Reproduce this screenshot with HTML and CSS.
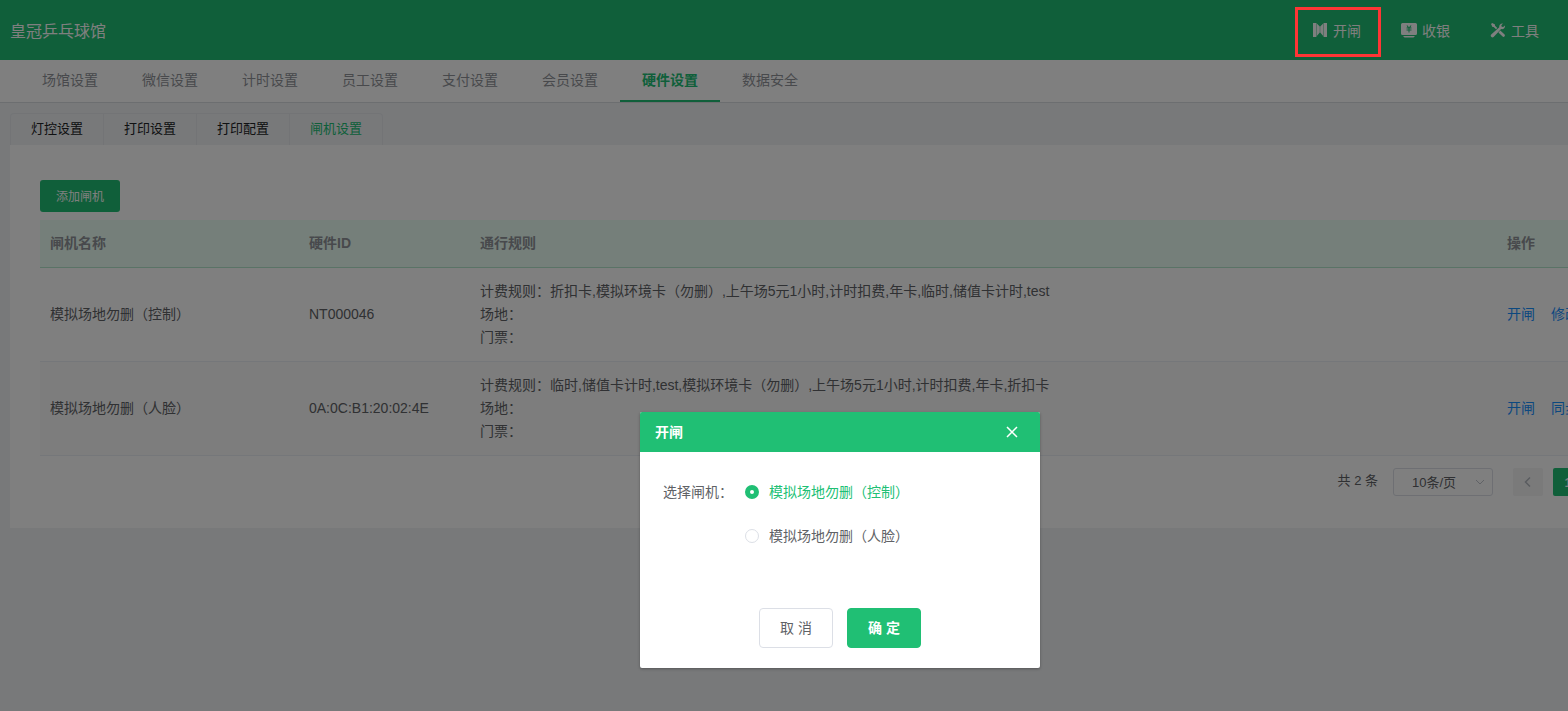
FILE: index.html
```html
<!DOCTYPE html>
<html lang="zh-CN">

<head>
  <meta charset="UTF-8">
  <meta name="viewport" content="width=device-width, initial-scale=1.0">
  <title>闸机设置</title>
  <link rel="stylesheet" href="styles.css">
</head>

<body>
  <div class="page">
    <header class="topbar">
      <h1>皇冠乒乓球馆</h1>
      <nav class="tools">
        <a href="#" class="marked">
          <svg width="16" height="16" viewBox="0 0 16 16" fill="currentColor">
            <path d="M1 1h3.4v14H1zM11.6 1H15v14h-3.4zM4.8 1.5L7.8 4.5v6L4.8 14zM11.2 1.5L8.2 4.5v6l3 3.5z" />
          </svg>
          开闸
        </a>
        <a href="#">
          <svg width="16" height="16" viewBox="0 0 16 16" fill="currentColor">
            <path fill-rule="evenodd" d="M1.5 1h13A1.5 1.5 0 0 1 16 2.500v9a1.500 1.500 0 0 1-1.500 1.500h-13A1.500 1.500 0 0 1 0 11.500v-9A1.500 1.500 0 0 1 1.500 1zM5.500 3.500l1.200 2H5.500v1h2v1h-2v1h2v2h1v-2h2v-1h-2v-1h2v-1H9.300l1.200-2H9.300L8 5.500 6.700 3.500z" />
            <path d="M2.500 14h11v.5l-1 1h-9l-1-1z" />
          </svg>
          收银
        </a>
        <a href="#">
          <svg width="16" height="16" viewBox="0 0 16 16" fill="currentColor">
            <path d="M1.200 12.400L9.300 5.200C8.800 3.200 10.300 1.200 13 1.400L11.300 3.200l.4 1.500 1.500.4L15 3.400c.3 2.600-1.800 4.200-3.900 3.700L3.600 15c-.7.6-1.800.5-2.400-.2-.6-.7-.7-1.700 0-2.400z" />
            <path d="M1 2l1.200-1L5 2.500v1.200L7.300 6 6 7.300 3.700 5H2.500zM10.300 8.500l4.300 4c1.100 1.200-.7 3.200-2 2.100l-4.200-4.200z" />
          </svg>
          工具
        </a>
      </nav>
    </header>

    <nav class="main-tabs">
      <a href="#">场馆设置</a>
      <a href="#">微信设置</a>
      <a href="#">计时设置</a>
      <a href="#">员工设置</a>
      <a href="#">支付设置</a>
      <a href="#">会员设置</a>
      <a href="#" class="active">硬件设置</a>
      <a href="#">数据安全</a>
    </nav>

    <main>
      <nav class="sub-tabs">
        <a href="#">灯控设置</a>
        <a href="#">打印设置</a>
        <a href="#">打印配置</a>
        <a href="#" class="active">闸机设置</a>
      </nav>

      <section class="panel">
        <button type="button" class="add-button">添加闸机</button>
        <table>
          <colgroup>
            <col class="col-name">
            <col class="col-id">
            <col>
            <col class="col-actions">
          </colgroup>
          <thead>
            <tr>
              <th>闸机名称</th>
              <th>硬件ID</th>
              <th>通行规则</th>
              <th>操作</th>
            </tr>
          </thead>
          <tbody>
            <tr>
              <td>模拟场地勿删（控制）</td>
              <td>NT000046</td>
              <td>
                计费规则：折扣卡,模拟环境卡（勿删）,上午场5元1小时,计时扣费,年卡,临时,储值卡计时,test<br>
                场地：<br>
                门票：
              </td>
              <td>
                <div class="actions">
                  <a href="#">开闸</a>
                  <a href="#">修改</a>
                </div>
              </td>
            </tr>
            <tr>
              <td>模拟场地勿删（人脸）</td>
              <td>0A:0C:B1:20:02:4E</td>
              <td>
                计费规则：临时,储值卡计时,test,模拟环境卡（勿删）,上午场5元1小时,计时扣费,年卡,折扣卡<br>
                场地：<br>
                门票：
              </td>
              <td>
                <div class="actions">
                  <a href="#">开闸</a>
                  <a href="#">同步</a>
                </div>
              </td>
            </tr>
          </tbody>
        </table>

        <div class="pagination">
          <span>共 2 条</span>
          <div class="page-size">
            <select aria-label="每页条数">
              <option>10条/页</option>
              <option>20条/页</option>
            </select>
            <svg width="10" height="10" viewBox="0 0 10 10" fill="none" stroke="currentColor">
              <path d="M1 3l4 4 4-4" />
            </svg>
          </div>
          <div class="pager">
            <button type="button" aria-label="上一页" disabled>
              <svg width="12" height="12" viewBox="0 0 12 12" fill="none" stroke="currentColor" stroke-width="1.500">
                <path d="M8 1.500L3.500 6 8 10.500" />
              </svg>
            </button>
            <button type="button" class="current">1</button>
            <button type="button" aria-label="下一页" disabled>
              <svg width="12" height="12" viewBox="0 0 12 12" fill="none" stroke="currentColor" stroke-width="1.500">
                <path d="M4 1.500L8.500 6 4 10.500" />
              </svg>
            </button>
          </div>
        </div>
      </section>
    </main>

    <div class="overlay">
      <form class="dialog" role="dialog" aria-labelledby="dialogTitle">
        <div class="dialog-header">
          <h2 id="dialogTitle">开闸</h2>
          <button type="button" class="close" aria-label="关闭">
            <svg width="12" height="12" viewBox="0 0 12 12" fill="none" stroke="currentColor" stroke-width="1.500">
              <path d="M1 1l10 10M11 1L1 11" />
            </svg>
          </button>
        </div>
        <div class="dialog-body">
          <span id="gateLabel">选择闸机：</span>
          <div class="options" role="radiogroup" aria-labelledby="gateLabel">
            <label><input type="radio" name="gate" checked><span>模拟场地勿删（控制）</span></label>
            <label><input type="radio" name="gate"><span>模拟场地勿删（人脸）</span></label>
          </div>
        </div>
        <div class="dialog-footer">
          <button type="button">取 消</button>
          <button type="submit" class="primary">确 定</button>
        </div>
      </form>
    </div>
  </div>
</body>

</html>
```

FILE: styles.css
```css
* {
  box-sizing: border-box;
}

body {
  margin: 0;
  font-family: "Liberation Sans", "Noto Sans CJK SC", sans-serif;
  font-size: 14px;
  color: #606266;
  background: #f0f2f5;
  overflow: hidden;
}

a {
  text-decoration: none;
}

button,
select {
  font-family: inherit;
  cursor: pointer;
}

/* the layout is designed for wide desktop screens */
.page {
  position: relative;
  min-width: 1680px;
  min-height: 100vh;
}

.topbar {
  display: flex;
  justify-content: space-between;
  align-items: center;
  height: 60px;
  padding: 0 121px 0 10px;
  color: #fff;
  background: #20bf74;
}

.topbar h1 {
  margin: 0;
  font-size: 16px;
  font-weight: normal;
}

.tools {
  display: flex;
}

.tools a {
  position: relative;
  display: flex;
  align-items: center;
  gap: 5px;
  height: 60px;
  padding: 0 20px;
  color: #fff;
}

.marked::after {
  content: "";
  position: absolute;
  top: 7px;
  right: 0;
  bottom: 3px;
  left: 3px;
  border: 3px solid #ff3535;
  z-index: 20;
}

.main-tabs {
  display: flex;
  padding-left: 20px;
  background: #fff;
  border-bottom: 1px solid #d8dce0;
}

.main-tabs a {
  width: 100px;
  height: 42px;
  line-height: 40px;
  text-align: center;
  color: #909399;
}

.main-tabs .active {
  font-weight: bold;
  color: #20bf74;
  border-bottom: 2px solid #20bf74;
}

main {
  padding: 10px 10px 0;
}

.sub-tabs {
  display: inline-flex;
  vertical-align: top;
  border: 1px solid #e6e9ed;
  border-bottom: none;
  border-radius: 4px 4px 0 0;
}

.sub-tabs a {
  height: 31px;
  padding: 0 20px;
  font-size: 13px;
  line-height: 29px;
  color: #202224;
}

.sub-tabs a + a {
  border-left: 1px solid #e6e9ed;
}

.sub-tabs .active {
  color: #20bf74;
}

.panel {
  padding: 35px 30px 32px;
  background: #fff;
}

.add-button {
  display: block;
  width: 80px;
  height: 32px;
  margin-bottom: 8px;
  padding: 0 0 2px;
  font-size: 12px;
  color: #fff;
  background: #20bf74;
  border: none;
  border-radius: 3px;
}

table {
  width: 100%;
  table-layout: fixed;
  border-collapse: separate;
  border-spacing: 0;
}

.col-name {
  width: 259px;
}

.col-id {
  width: 171px;
}

.col-actions {
  width: 143px;
}

th,
td {
  padding: 12px 10px;
  line-height: 23px;
  text-align: left;
  border-bottom: 1px solid #ebeef5;
}

th {
  color: #909399;
  background: #eafff4;
  border-bottom-color: #b4e6cd;
}

tbody tr:nth-child(even) {
  background: #fafafa;
}

.actions {
  display: flex;
  gap: 16px;
}

.actions a {
  color: #1890ff;
}

.pagination {
  display: flex;
  justify-content: flex-end;
  align-items: center;
  padding: 12px 17px 0 0;
  font-size: 13px;
  line-height: 28px;
}

.pagination > span {
  height: 28px;
  line-height: 26px;
}

.page-size {
  position: relative;
  margin: 0 20px 0 15px;
}

.page-size select {
  display: block;
  width: 100px;
  height: 28px;
  padding: 0 18px;
  font-size: 13px;
  color: #606266;
  background: #fff;
  border: 1px solid #dcdfe6;
  border-radius: 3px;
  appearance: none;
}

.page-size svg {
  position: absolute;
  top: 9px;
  right: 8px;
  color: #c0c4cc;
}

.pager {
  display: flex;
  gap: 10px;
}

.pager button {
  display: flex;
  justify-content: center;
  align-items: center;
  width: 30px;
  height: 28px;
  padding: 0;
  font-size: 13px;
  color: #b4b8bf;
  background: #f4f4f5;
  border: none;
  border-radius: 2px;
}

.pager .current {
  font-weight: bold;
  color: #fff;
  background: #20bf74;
}

.overlay {
  position: absolute;
  top: 0;
  right: 0;
  bottom: 0;
  left: 0;
  padding-top: 412px;
  background: rgba(0, 0, 0, 0.5);
  z-index: 10;
}

.dialog {
  width: 400px;
  margin: 0 auto;
  background: #fff;
  border-radius: 2px;
  box-shadow: 0 1px 3px rgba(0, 0, 0, 0.3);
  overflow: hidden;
}

.dialog-header {
  display: flex;
  justify-content: space-between;
  align-items: center;
  height: 40px;
  padding: 0 20px 0 15px;
  color: #fff;
  background: #20bf74;
}

.dialog-header h2 {
  margin: 0;
  font-size: 14px;
  line-height: 20px;
}

.close {
  display: flex;
  padding: 2px;
  color: #fff;
  background: none;
  border: none;
}

.dialog-body {
  display: flex;
  gap: 12px;
  padding: 18px 23px 0;
  line-height: 44px;
}

.options label {
  display: flex;
  align-items: center;
  gap: 10px;
  cursor: pointer;
}

.options input {
  width: 14px;
  height: 14px;
  margin: 0;
  background: #fff;
  border: 1px solid #dcdfe6;
  border-radius: 50%;
  appearance: none;
}

.options input:checked {
  border: 5px solid #20bf74;
}

.options input:checked + span {
  color: #20bf74;
}

.dialog-footer {
  display: flex;
  justify-content: center;
  gap: 14px;
  padding: 50px 0 20px;
}

.dialog-footer button {
  width: 74px;
  height: 40px;
  padding: 0 0 2px;
  font-size: 14px;
  color: #606266;
  background: #fff;
  border: 1px solid #dcdfe6;
  border-radius: 4px;
}

.dialog-footer .primary {
  font-weight: bold;
  color: #fff;
  background: #20bf74;
  border-color: #20bf74;
}
```
